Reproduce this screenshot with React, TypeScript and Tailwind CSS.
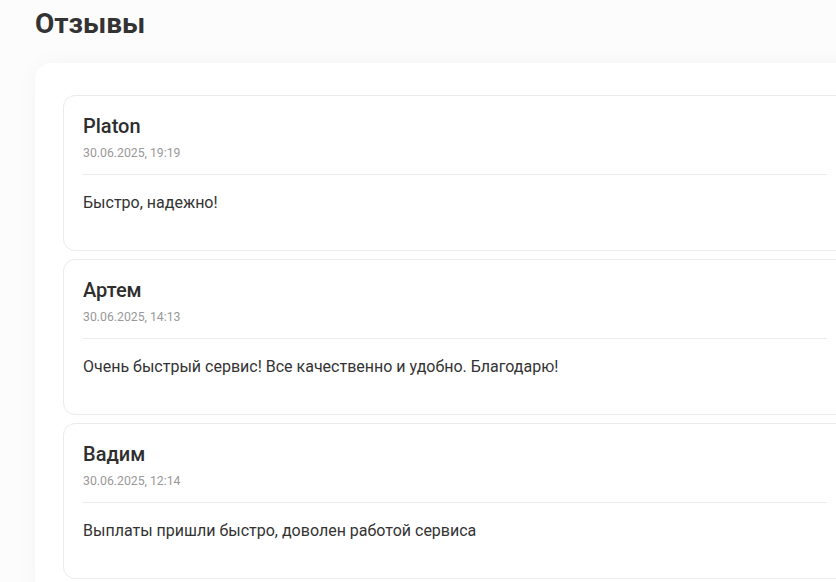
import React from "react";

const reviews = [
  { name: "Platon", date: "30.06.2025, 19:19", text: "Быстро, надежно!" },
  { name: "Артем", date: "30.06.2025, 14:13", text: "Очень быстрый сервис! Все качественно и удобно. Благодарю!" },
  { name: "Вадим", date: "30.06.2025, 12:14", text: "Выплаты пришли быстро, доволен работой сервиса" },
];

export default function App() {
  return (
    <div className="w-[836px] h-[582px] overflow-hidden bg-[#fcfcfc] font-['Roboto',_'Noto_Sans',_sans-serif]">
      <div className="pl-[35px] pt-[6px]">
        <h1 className="text-[28px] leading-[36px] font-bold text-[#333333]">Отзывы</h1>
        <div className="mt-[21px] w-[841px] rounded-2xl bg-white shadow-[0_0_24px_rgba(0,0,0,0.035)] pt-[32px] px-[28px] pb-6 flex flex-col gap-[8px]">
          {reviews.map((r) => (
            <div key={r.name} className="rounded-xl border border-[#ebebeb] bg-white pl-[19px] pr-5 pt-5 pb-[35px]">
              <div className="text-[20px] leading-5 font-medium text-[#2e2e2e]">{r.name}</div>
              <div className="mt-[9px] text-[12.25px] leading-4 text-[#999999]">{r.date}</div>
              <div className="mt-[13px] h-px bg-[#ebebeb]" />
              <div className="mt-[16px] text-[16px] leading-6 text-[#333333]">{r.text}</div>
            </div>
          ))}
        </div>
      </div>
    </div>
  );
}
